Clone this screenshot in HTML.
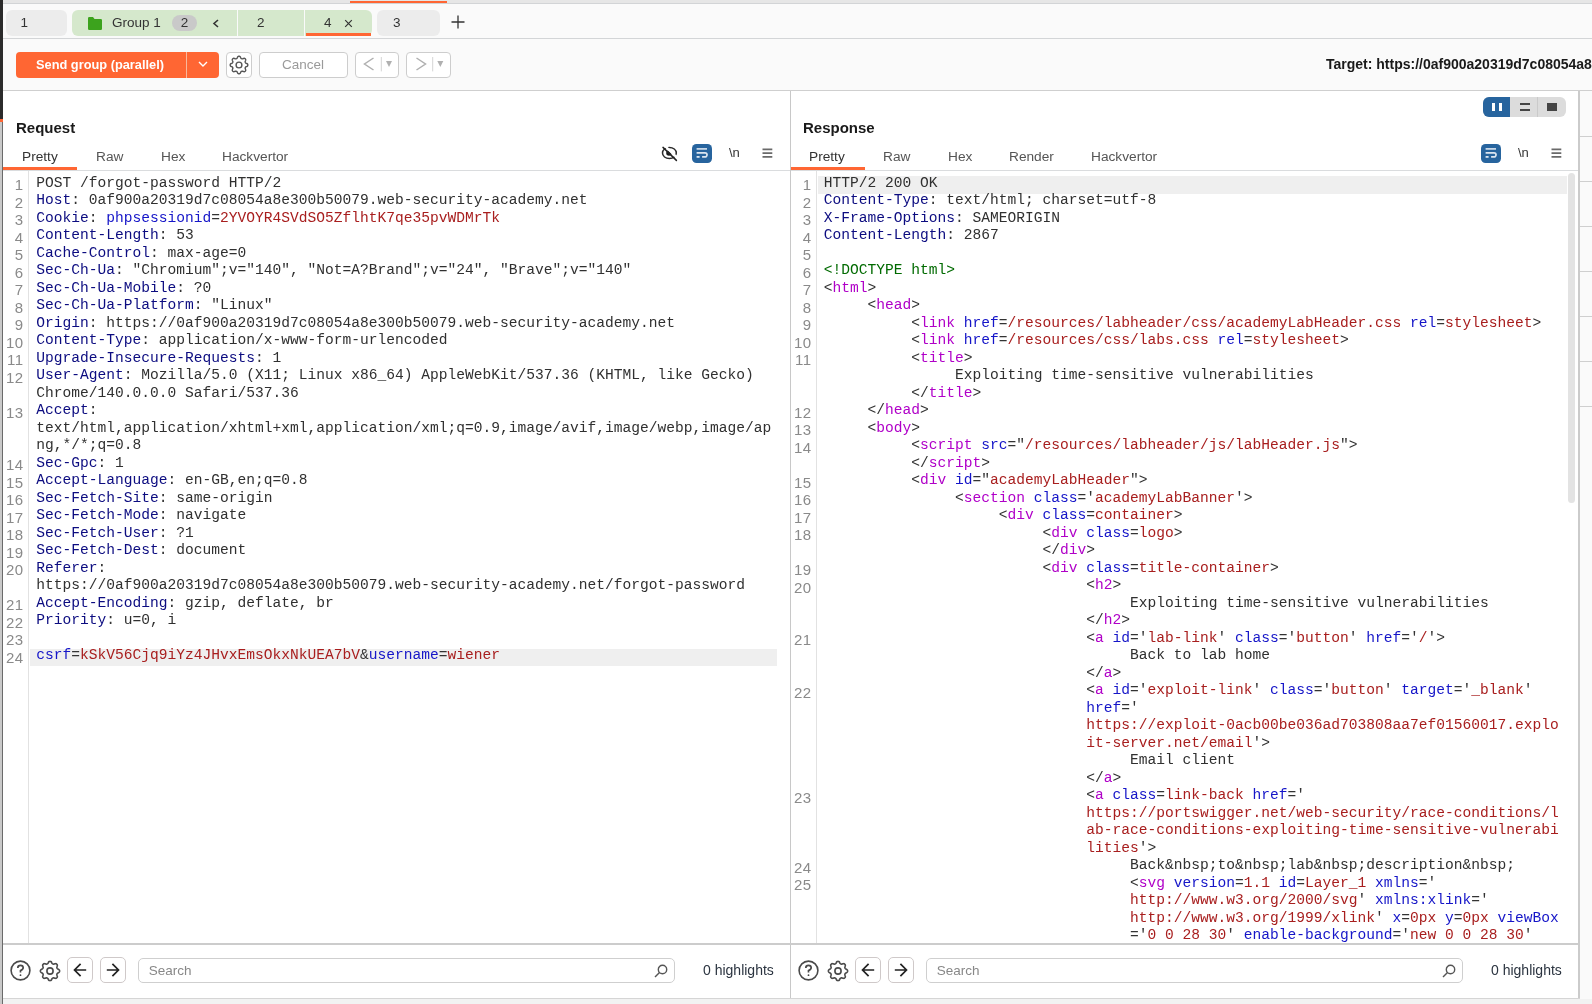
<!DOCTYPE html>
<html><head><meta charset="utf-8">
<style>
*{box-sizing:border-box;margin:0;padding:0}
html,body{width:1592px;height:1004px;overflow:hidden;background:#fafafa;font-family:"Liberation Sans",sans-serif;position:relative}
.abs{position:absolute}
#root{position:absolute;left:0;top:0;width:1592px;height:1004px;will-change:transform}
/* left border */
#lb1{left:0;top:0;width:3px;height:119px;background:#2b2b2b}
#lb2{left:0;top:119px;width:3px;height:3px;background:#ff6633}
#lb3{left:0;top:122px;width:3px;height:882px;background:#c9c9c9;border-right:1px solid #6a6a6a}
#topstrip{left:3px;top:0;width:1589px;height:4px;background:#e6e6e6;border-bottom:1px solid #d2d4d6}
#toporange{left:350px;top:0.5px;width:97px;height:2.5px;background:#ff6633}
#tabline{left:3px;top:38px;width:1589px;height:1px;background:#d3d5d7}
.tab{position:absolute;top:9.5px;height:26px;background:#ececec;border-radius:6px;font-size:13.5px;color:#333;line-height:26px}
.gtab{position:absolute;top:9.5px;height:26px;background:#d5e8cc;font-size:13.5px;color:#333;line-height:26px}
#toolline{left:3px;top:90px;width:1589px;height:1px;background:#cfcfcf}
.btn{position:absolute;top:52px;height:26px;background:#fff;border:1px solid #cdcdcd;border-radius:4px}
/* panels */
.panel{position:absolute;top:91px;height:853px;background:#fff}
.ptitle{position:absolute;font-weight:bold;font-size:15px;color:#1a1a1a;top:118.5px}
.ptab{position:absolute;font-size:13.7px;color:#555;top:148.5px}
.ptab.sel{color:#333}
.code{position:absolute;top:176px;font-family:"Liberation Mono",monospace;font-size:14.58px;line-height:17.5px;white-space:pre;color:#303030}
.gutter{position:absolute;top:175px;font-size:15px;letter-spacing:0.6px;line-height:17.5px;color:#8a8a8a;text-align:right}
.ln{height:17.5px;padding-top:1px}
.row{height:17.5px;padding-left:6.3px}
.tx{position:relative;top:-1.2px}
.row.hl{background:#efefef}
.hn{color:#0c0c80}
.pu{color:#333}
.an{color:#1515c8}
.av{color:#a81e1e}
.tg{color:#b000c8}
.dt{color:#006a00}
.bbar{position:absolute;top:944.5px;height:55px;background:#fff}
.search{position:absolute;top:958px;height:25px;background:#fff;border:1px solid #cfcfcf;border-radius:5px;font-size:13.5px;color:#888;line-height:23px;padding-left:10px}
.hl0{position:absolute;top:962px;font-size:14px;color:#2b3440}
.navbtn{position:absolute;top:957px;width:26px;height:26px;border:1px solid #cfc9c9;border-radius:5px;background:#fff}
</style></head><body><div id="root">
<div class="abs" id="lb1"></div><div class="abs" id="lb2"></div><div class="abs" id="lb3"></div>
<div class="abs" id="topstrip"></div><div class="abs" id="toporange"></div>

<!-- tab bar -->
<div class="tab" style="left:6px;width:61px;"><span style="position:absolute;left:14.5px">1</span></div>
<div class="gtab" style="left:72px;width:165px;border-radius:6px 0 0 6px">
  <svg class="abs" style="left:16px;top:7.5px" width="14" height="13" viewBox="0 0 14 13"><path d="M0 1.2 Q0 0 1.2 0 H5 L6.5 2 H12.8 Q14 2 14 3.2 V11.8 Q14 13 12.8 13 H1.2 Q0 13 0 11.8Z" fill="#3ca31d"/></svg>
  <span style="position:absolute;left:40px">Group 1</span>
  <span style="position:absolute;left:100px;top:5px;width:25px;height:16px;border-radius:8px;background:#c9c9c9;line-height:16px;text-align:center">2</span>
  <svg class="abs" style="left:140px;top:9px" width="8" height="9" viewBox="0 0 8 9"><path d="M6 1 L2 4.5 L6 8" stroke="#333" stroke-width="1.6" fill="none"/></svg>
</div>
<div class="gtab" style="left:238px;width:66px;"><span style="position:absolute;left:19px">2</span></div>
<div class="gtab" style="left:305px;width:67px;border-radius:0 6px 6px 0"><span style="position:absolute;left:19px">4</span>
  <svg class="abs" style="left:39px;top:9.5px" width="9" height="9" viewBox="0 0 9 9"><path d="M1.2 1.2 L7.8 7.8 M7.8 1.2 L1.2 7.8" stroke="#333" stroke-width="1.2"/></svg>
  <div class="abs" style="left:1px;top:23.5px;width:65px;height:2.5px;background:#ff6633"></div>
</div>
<div class="tab" style="left:377px;width:63px;"><span style="position:absolute;left:16px">3</span></div>
<svg class="abs" style="left:451px;top:15px" width="14" height="14" viewBox="0 0 14 14"><path d="M7 0.5 V13.5 M0.5 7 H13.5" stroke="#333" stroke-width="1.3"/></svg>
<div class="abs" id="tabline"></div>

<!-- toolbar -->
<div class="abs" style="left:16px;top:52px;width:203px;height:26px;background:#ff6633;border-radius:4px"></div>
<div class="abs" style="left:186px;top:52px;width:1px;height:26px;background:#f9b89c"></div>
<div class="abs" style="left:36px;top:56px;font-weight:bold;font-size:12.8px;color:#fff;line-height:17px">Send group (parallel)</div>
<svg class="abs" style="left:198px;top:61px" width="10" height="6" viewBox="0 0 10 6"><path d="M1 1 L5 5 L9 1" stroke="#fff" stroke-width="1.4" fill="none"/></svg>
<div class="btn" style="left:226px;width:26px"></div>
<svg class="abs" style="left:226.75px;top:53px" width="24" height="24" viewBox="0 0 24 24" fill="none" stroke="#555" stroke-width="1.4"><path d="M12.00 3.20 L12.34 3.23 L12.68 3.32 L13.00 3.51 L13.29 3.86 L13.52 4.35 L13.72 4.85 L13.91 5.21 L14.13 5.45 L14.36 5.60 L14.60 5.72 L14.86 5.81 L15.13 5.86 L15.45 5.85 L15.84 5.73 L16.33 5.51 L16.84 5.33 L17.29 5.29 L17.66 5.38 L17.96 5.55 L18.22 5.78 L18.45 6.04 L18.62 6.34 L18.71 6.71 L18.67 7.16 L18.49 7.67 L18.27 8.16 L18.15 8.55 L18.14 8.87 L18.19 9.14 L18.28 9.40 L18.40 9.64 L18.55 9.87 L18.79 10.09 L19.15 10.28 L19.65 10.48 L20.14 10.71 L20.49 11.00 L20.68 11.32 L20.77 11.66 L20.80 12.00 L20.77 12.34 L20.68 12.68 L20.49 13.00 L20.14 13.29 L19.65 13.52 L19.15 13.72 L18.79 13.91 L18.55 14.13 L18.40 14.36 L18.28 14.60 L18.19 14.86 L18.14 15.13 L18.15 15.45 L18.27 15.84 L18.49 16.33 L18.67 16.84 L18.71 17.29 L18.62 17.66 L18.45 17.96 L18.22 18.22 L17.96 18.45 L17.66 18.62 L17.29 18.71 L16.84 18.67 L16.33 18.49 L15.84 18.27 L15.45 18.15 L15.13 18.14 L14.86 18.19 L14.60 18.28 L14.36 18.40 L14.13 18.55 L13.91 18.79 L13.72 19.15 L13.52 19.65 L13.29 20.14 L13.00 20.49 L12.68 20.68 L12.34 20.77 L12.00 20.80 L11.66 20.77 L11.32 20.68 L11.00 20.49 L10.71 20.14 L10.48 19.65 L10.28 19.15 L10.09 18.79 L9.87 18.55 L9.64 18.40 L9.40 18.28 L9.14 18.19 L8.87 18.14 L8.55 18.15 L8.16 18.27 L7.67 18.49 L7.16 18.67 L6.71 18.71 L6.34 18.62 L6.04 18.45 L5.78 18.22 L5.55 17.96 L5.38 17.66 L5.29 17.29 L5.33 16.84 L5.51 16.33 L5.73 15.84 L5.85 15.45 L5.86 15.13 L5.81 14.86 L5.72 14.60 L5.60 14.36 L5.45 14.13 L5.21 13.91 L4.85 13.72 L4.35 13.52 L3.86 13.29 L3.51 13.00 L3.32 12.68 L3.23 12.34 L3.20 12.00 L3.23 11.66 L3.32 11.32 L3.51 11.00 L3.86 10.71 L4.35 10.48 L4.85 10.28 L5.21 10.09 L5.45 9.87 L5.60 9.64 L5.72 9.40 L5.81 9.14 L5.86 8.87 L5.85 8.55 L5.73 8.16 L5.51 7.67 L5.33 7.16 L5.29 6.71 L5.38 6.34 L5.55 6.04 L5.78 5.78 L6.04 5.55 L6.34 5.38 L6.71 5.29 L7.16 5.33 L7.67 5.51 L8.16 5.73 L8.55 5.85 L8.87 5.86 L9.14 5.81 L9.40 5.72 L9.64 5.60 L9.87 5.45 L10.09 5.21 L10.28 4.85 L10.48 4.35 L10.71 3.86 L11.00 3.51 L11.32 3.32 L11.66 3.23Z"/><circle cx="12" cy="12" r="2.9"/></svg>
<div class="btn" style="left:258.5px;width:89px;font-size:13.5px;color:#9a9a9a;text-align:center;line-height:24px">Cancel</div>
<div class="btn" style="left:355px;width:44px"></div>
<svg class="abs" style="left:362px;top:57px" width="32" height="16" viewBox="0 0 32 16"><path d="M11.5 1 L2.5 7 L11.5 13" stroke="#b0b0b0" stroke-width="1.5" fill="none"/><path d="M19.3 0 V14.4" stroke="#d4d4d4" stroke-width="1"/><path d="M24 4 H30 L27 10Z" fill="#b0b0b0"/></svg>
<div class="btn" style="left:406px;width:45px"></div>
<svg class="abs" style="left:413px;top:57px" width="32" height="16" viewBox="0 0 32 16"><path d="M3.5 1 L12.5 7 L3.5 13" stroke="#b0b0b0" stroke-width="1.5" fill="none"/><path d="M19.7 0 V14.4" stroke="#d4d4d4" stroke-width="1"/><path d="M24.3 4 H30.3 L27.3 10Z" fill="#b0b0b0"/></svg>
<div class="abs" style="left:1326px;top:55.5px;font-weight:bold;font-size:14px;color:#1a1a1a;white-space:nowrap;line-height:17px">Target: https://0af900a20319d7c08054a8e300b50079.web-security-academy.net</div>
<div class="abs" id="toolline"></div>

<!-- request panel -->
<div class="panel" style="left:3px;width:787px"></div>
<div class="ptitle" style="left:16px">Request</div>
<div class="ptab sel" style="left:22px">Pretty</div>
<div class="ptab" style="left:96px">Raw</div>
<div class="ptab" style="left:161px">Hex</div>
<div class="ptab" style="left:222px">Hackvertor</div>
<div class="abs" style="left:3px;top:170px;width:787px;height:1px;background:#dadcde"></div>
<div class="abs" style="left:3px;top:167px;width:74px;height:3px;background:#ff6633"></div>
<!-- request icons -->
<svg class="abs" style="left:658px;top:143px" width="24" height="21" viewBox="0 0 24 21" fill="none"><ellipse cx="11.4" cy="10" rx="6.9" ry="5.6" stroke="#2a2a2a" stroke-width="1.5"/><circle cx="11" cy="10" r="2.8" fill="#1a1a1a"/><path d="M6.6 2.6 L20 15.6" stroke="#fff" stroke-width="2.4"/><path d="M5 4.4 L18.4 17.4" stroke="#222" stroke-width="1.5" stroke-linecap="round"/></svg>
<div class="abs" style="left:692px;top:144.4px;width:19.8px;height:18.4px;background:#27649e;border-radius:4.5px"></div>
<svg class="abs" style="left:692px;top:144px" width="20" height="19" viewBox="0 0 20 19" fill="none" stroke="#dbe5f0" stroke-width="1.6"><path d="M4.6 4.9 H15"/><path d="M4.6 8.8 H13 A2.05 2.05 0 0 1 13 12.9 H10.1" stroke-width="1.7"/><path d="M4.6 12.9 H7.6" stroke-width="1.8"/></svg>
<div class="abs" style="left:729px;top:145px;font-size:13px;color:#333">\n</div>
<svg class="abs" style="left:761.8px;top:148px" width="11" height="11" viewBox="0 0 11 11"><path d="M0.5 1.4 H10.3 M0.5 5.1 H10.3 M0.5 8.9 H10.3" stroke="#6a6a6a" stroke-width="1.8"/></svg>
<!-- request code -->
<div class="abs" style="left:28px;top:171px;width:1px;height:773px;background:#e2e2e2"></div>
<div class="gutter" style="left:3px;width:20.8px"><div class="ln">1</div><div class="ln">2</div><div class="ln">3</div><div class="ln">4</div><div class="ln">5</div><div class="ln">6</div><div class="ln">7</div><div class="ln">8</div><div class="ln">9</div><div class="ln">10</div><div class="ln">11</div><div class="ln">12</div><div class="ln"></div><div class="ln">13</div><div class="ln"></div><div class="ln"></div><div class="ln">14</div><div class="ln">15</div><div class="ln">16</div><div class="ln">17</div><div class="ln">18</div><div class="ln">19</div><div class="ln">20</div><div class="ln"></div><div class="ln">21</div><div class="ln">22</div><div class="ln">23</div><div class="ln">24</div></div>
<div class="code" style="left:30px;width:747px"><div class="row"><span class="tx">POST /forgot-password HTTP/2</span></div><div class="row"><span class="tx"><span class="hn">Host</span><span class="pu">:</span> 0af900a20319d7c08054a8e300b50079.web-security-academy.net</span></div><div class="row"><span class="tx"><span class="hn">Cookie</span><span class="pu">:</span> <span class="an">phpsessionid</span><span class="pu">=</span><span class="av">2YVOYR4SVdSO5ZflhtK7qe35pvWDMrTk</span></span></div><div class="row"><span class="tx"><span class="hn">Content-Length</span><span class="pu">:</span> 53</span></div><div class="row"><span class="tx"><span class="hn">Cache-Control</span><span class="pu">:</span> max-age=0</span></div><div class="row"><span class="tx"><span class="hn">Sec-Ch-Ua</span><span class="pu">:</span> "Chromium";v="140", "Not=A?Brand";v="24", "Brave";v="140"</span></div><div class="row"><span class="tx"><span class="hn">Sec-Ch-Ua-Mobile</span><span class="pu">:</span> ?0</span></div><div class="row"><span class="tx"><span class="hn">Sec-Ch-Ua-Platform</span><span class="pu">:</span> "Linux"</span></div><div class="row"><span class="tx"><span class="hn">Origin</span><span class="pu">:</span> https://0af900a20319d7c08054a8e300b50079.web-security-academy.net</span></div><div class="row"><span class="tx"><span class="hn">Content-Type</span><span class="pu">:</span> application/x-www-form-urlencoded</span></div><div class="row"><span class="tx"><span class="hn">Upgrade-Insecure-Requests</span><span class="pu">:</span> 1</span></div><div class="row"><span class="tx"><span class="hn">User-Agent</span><span class="pu">:</span> Mozilla/5.0 (X11; Linux x86_64) AppleWebKit/537.36 (KHTML, like Gecko)</span></div><div class="row"><span class="tx">Chrome/140.0.0.0 Safari/537.36</span></div><div class="row"><span class="tx"><span class="hn">Accept</span><span class="pu">:</span></span></div><div class="row"><span class="tx">text/html,application/xhtml+xml,application/xml;q=0.9,image/avif,image/webp,image/ap</span></div><div class="row"><span class="tx">ng,*/*;q=0.8</span></div><div class="row"><span class="tx"><span class="hn">Sec-Gpc</span><span class="pu">:</span> 1</span></div><div class="row"><span class="tx"><span class="hn">Accept-Language</span><span class="pu">:</span> en-GB,en;q=0.8</span></div><div class="row"><span class="tx"><span class="hn">Sec-Fetch-Site</span><span class="pu">:</span> same-origin</span></div><div class="row"><span class="tx"><span class="hn">Sec-Fetch-Mode</span><span class="pu">:</span> navigate</span></div><div class="row"><span class="tx"><span class="hn">Sec-Fetch-User</span><span class="pu">:</span> ?1</span></div><div class="row"><span class="tx"><span class="hn">Sec-Fetch-Dest</span><span class="pu">:</span> document</span></div><div class="row"><span class="tx"><span class="hn">Referer</span><span class="pu">:</span></span></div><div class="row"><span class="tx">https://0af900a20319d7c08054a8e300b50079.web-security-academy.net/forgot-password</span></div><div class="row"><span class="tx"><span class="hn">Accept-Encoding</span><span class="pu">:</span> gzip, deflate, br</span></div><div class="row"><span class="tx"><span class="hn">Priority</span><span class="pu">:</span> u=0, i</span></div><div class="row"><span class="tx"></span></div><div class="row hl"><span class="tx"><span class="an">csrf</span><span class="pu">=</span><span class="av">kSkV56Cjq9iYz4JHvxEmsOkxNkUEA7bV</span><span class="pu">&amp;</span><span class="an">username</span><span class="pu">=</span><span class="av">wiener</span></span></div></div>

<!-- divider -->
<div class="abs" style="left:790px;top:91px;width:1px;height:908px;background:#c8c8c8"></div>

<!-- response panel -->
<div class="panel" style="left:791px;width:787px"></div>
<div class="ptitle" style="left:803px">Response</div>
<div class="ptab sel" style="left:809px">Pretty</div>
<div class="ptab" style="left:883px">Raw</div>
<div class="ptab" style="left:948px">Hex</div>
<div class="ptab" style="left:1009px">Render</div>
<div class="ptab" style="left:1091px">Hackvertor</div>
<div class="abs" style="left:791px;top:170px;width:787px;height:1px;background:#dadcde"></div>
<div class="abs" style="left:791px;top:167px;width:74px;height:3px;background:#ff6633"></div>
<!-- layout toggles -->
<div class="abs" style="left:1483px;top:97px;width:83px;height:20px;background:#dcdcdc;border-radius:6px;overflow:hidden">
  <div class="abs" style="left:0;top:0;width:27px;height:20px;background:#27649e"></div>
  <div class="abs" style="left:54px;top:0;width:1px;height:20px;background:#cacaca"></div>
  <div class="abs" style="left:9px;top:5.5px;width:3px;height:8.5px;background:#fff"></div>
  <div class="abs" style="left:15.5px;top:5.5px;width:3px;height:8.5px;background:#fff"></div>
  <div class="abs" style="left:36.5px;top:5.5px;width:10px;height:2.5px;background:#444"></div>
  <div class="abs" style="left:36.5px;top:11.5px;width:10px;height:2.5px;background:#444"></div>
  <div class="abs" style="left:64px;top:5.5px;width:10px;height:8.5px;background:#444"></div>
</div>
<div class="abs" style="left:1481px;top:144.4px;width:19.8px;height:18.4px;background:#27649e;border-radius:4.5px"></div>
<svg class="abs" style="left:1481px;top:144px" width="20" height="19" viewBox="0 0 20 19" fill="none" stroke="#dbe5f0" stroke-width="1.6"><path d="M4.6 4.9 H15"/><path d="M4.6 8.8 H13 A2.05 2.05 0 0 1 13 12.9 H10.1" stroke-width="1.7"/><path d="M4.6 12.9 H7.6" stroke-width="1.8"/></svg>
<div class="abs" style="left:1518px;top:145px;font-size:13px;color:#333">\n</div>
<svg class="abs" style="left:1550.5px;top:148px" width="11" height="11" viewBox="0 0 11 11"><path d="M0.5 1.4 H10.3 M0.5 5.1 H10.3 M0.5 8.9 H10.3" stroke="#6a6a6a" stroke-width="1.8"/></svg>
<!-- response code -->
<div class="abs" style="left:816px;top:171px;width:1px;height:773px;background:#e2e2e2"></div>
<div class="abs" style="left:791px;top:171px;width:787px;height:773px;overflow:hidden">
  <div class="gutter" style="left:0;top:4px;width:20.8px"><div class="ln">1</div><div class="ln">2</div><div class="ln">3</div><div class="ln">4</div><div class="ln">5</div><div class="ln">6</div><div class="ln">7</div><div class="ln">8</div><div class="ln">9</div><div class="ln">10</div><div class="ln">11</div><div class="ln"></div><div class="ln"></div><div class="ln">12</div><div class="ln">13</div><div class="ln">14</div><div class="ln"></div><div class="ln">15</div><div class="ln">16</div><div class="ln">17</div><div class="ln">18</div><div class="ln"></div><div class="ln">19</div><div class="ln">20</div><div class="ln"></div><div class="ln"></div><div class="ln">21</div><div class="ln"></div><div class="ln"></div><div class="ln">22</div><div class="ln"></div><div class="ln"></div><div class="ln"></div><div class="ln"></div><div class="ln"></div><div class="ln">23</div><div class="ln"></div><div class="ln"></div><div class="ln"></div><div class="ln">24</div><div class="ln">25</div><div class="ln"></div><div class="ln"></div><div class="ln"></div></div>
  <div class="code" style="left:26.5px;top:5px;width:749px"><div class="row hl"><span class="tx">HTTP/2 200 OK</span></div><div class="row"><span class="tx"><span class="hn">Content-Type</span><span class="pu">:</span> text/html; charset=utf-8</span></div><div class="row"><span class="tx"><span class="hn">X-Frame-Options</span><span class="pu">:</span> SAMEORIGIN</span></div><div class="row"><span class="tx"><span class="hn">Content-Length</span><span class="pu">:</span> 2867</span></div><div class="row"><span class="tx"></span></div><div class="row"><span class="tx"><span class="dt">&lt;!DOCTYPE html&gt;</span></span></div><div class="row"><span class="tx"><span class="pu">&lt;</span><span class="tg">html</span><span class="pu">&gt;</span></span></div><div class="row"><span class="tx">     <span class="pu">&lt;</span><span class="tg">head</span><span class="pu">&gt;</span></span></div><div class="row"><span class="tx">          <span class="pu">&lt;</span><span class="tg">link</span> <span class="an">href</span><span class="pu">=</span><span class="av">/resources/labheader/css/academyLabHeader.css</span> <span class="an">rel</span><span class="pu">=</span><span class="av">stylesheet</span><span class="pu">&gt;</span></span></div><div class="row"><span class="tx">          <span class="pu">&lt;</span><span class="tg">link</span> <span class="an">href</span><span class="pu">=</span><span class="av">/resources/css/labs.css</span> <span class="an">rel</span><span class="pu">=</span><span class="av">stylesheet</span><span class="pu">&gt;</span></span></div><div class="row"><span class="tx">          <span class="pu">&lt;</span><span class="tg">title</span><span class="pu">&gt;</span></span></div><div class="row"><span class="tx">               Exploiting time-sensitive vulnerabilities</span></div><div class="row"><span class="tx">          <span class="pu">&lt;/</span><span class="tg">title</span><span class="pu">&gt;</span></span></div><div class="row"><span class="tx">     <span class="pu">&lt;/</span><span class="tg">head</span><span class="pu">&gt;</span></span></div><div class="row"><span class="tx">     <span class="pu">&lt;</span><span class="tg">body</span><span class="pu">&gt;</span></span></div><div class="row"><span class="tx">          <span class="pu">&lt;</span><span class="tg">script</span> <span class="an">src</span><span class="pu">=</span><span class="pu">"</span><span class="av">/resources/labheader/js/labHeader.js</span><span class="pu">"</span><span class="pu">&gt;</span></span></div><div class="row"><span class="tx">          <span class="pu">&lt;/</span><span class="tg">script</span><span class="pu">&gt;</span></span></div><div class="row"><span class="tx">          <span class="pu">&lt;</span><span class="tg">div</span> <span class="an">id</span><span class="pu">=</span><span class="pu">"</span><span class="av">academyLabHeader</span><span class="pu">"</span><span class="pu">&gt;</span></span></div><div class="row"><span class="tx">               <span class="pu">&lt;</span><span class="tg">section</span> <span class="an">class</span><span class="pu">=</span><span class="pu">'</span><span class="av">academyLabBanner</span><span class="pu">'</span><span class="pu">&gt;</span></span></div><div class="row"><span class="tx">                    <span class="pu">&lt;</span><span class="tg">div</span> <span class="an">class</span><span class="pu">=</span><span class="av">container</span><span class="pu">&gt;</span></span></div><div class="row"><span class="tx">                         <span class="pu">&lt;</span><span class="tg">div</span> <span class="an">class</span><span class="pu">=</span><span class="av">logo</span><span class="pu">&gt;</span></span></div><div class="row"><span class="tx">                         <span class="pu">&lt;/</span><span class="tg">div</span><span class="pu">&gt;</span></span></div><div class="row"><span class="tx">                         <span class="pu">&lt;</span><span class="tg">div</span> <span class="an">class</span><span class="pu">=</span><span class="av">title-container</span><span class="pu">&gt;</span></span></div><div class="row"><span class="tx">                              <span class="pu">&lt;</span><span class="tg">h2</span><span class="pu">&gt;</span></span></div><div class="row"><span class="tx">                                   Exploiting time-sensitive vulnerabilities</span></div><div class="row"><span class="tx">                              <span class="pu">&lt;/</span><span class="tg">h2</span><span class="pu">&gt;</span></span></div><div class="row"><span class="tx">                              <span class="pu">&lt;</span><span class="tg">a</span> <span class="an">id</span><span class="pu">=</span><span class="pu">'</span><span class="av">lab-link</span><span class="pu">'</span> <span class="an">class</span><span class="pu">=</span><span class="pu">'</span><span class="av">button</span><span class="pu">'</span> <span class="an">href</span><span class="pu">=</span><span class="pu">'</span><span class="av">/</span><span class="pu">'</span><span class="pu">&gt;</span></span></div><div class="row"><span class="tx">                                   Back to lab home</span></div><div class="row"><span class="tx">                              <span class="pu">&lt;/</span><span class="tg">a</span><span class="pu">&gt;</span></span></div><div class="row"><span class="tx">                              <span class="pu">&lt;</span><span class="tg">a</span> <span class="an">id</span><span class="pu">=</span><span class="pu">'</span><span class="av">exploit-link</span><span class="pu">'</span> <span class="an">class</span><span class="pu">=</span><span class="pu">'</span><span class="av">button</span><span class="pu">'</span> <span class="an">target</span><span class="pu">=</span><span class="pu">'</span><span class="av">_blank</span><span class="pu">'</span></span></div><div class="row"><span class="tx">                              <span class="an">href</span><span class="pu">=</span><span class="pu">'</span></span></div><div class="row"><span class="tx">                              <span class="av">https://exploit-0acb00be036ad703808aa7ef01560017.explo</span></span></div><div class="row"><span class="tx">                              <span class="av">it-server.net/email</span><span class="pu">'</span><span class="pu">&gt;</span></span></div><div class="row"><span class="tx">                                   Email client</span></div><div class="row"><span class="tx">                              <span class="pu">&lt;/</span><span class="tg">a</span><span class="pu">&gt;</span></span></div><div class="row"><span class="tx">                              <span class="pu">&lt;</span><span class="tg">a</span> <span class="an">class</span><span class="pu">=</span><span class="av">link-back</span> <span class="an">href</span><span class="pu">=</span><span class="pu">'</span></span></div><div class="row"><span class="tx">                              <span class="av">https://portswigger.net/web-security/race-conditions/l</span></span></div><div class="row"><span class="tx">                              <span class="av">ab-race-conditions-exploiting-time-sensitive-vulnerabi</span></span></div><div class="row"><span class="tx">                              <span class="av">lities</span><span class="pu">'</span><span class="pu">&gt;</span></span></div><div class="row"><span class="tx">                                   Back&amp;nbsp;to&amp;nbsp;lab&amp;nbsp;description&amp;nbsp;</span></div><div class="row"><span class="tx">                                   <span class="pu">&lt;</span><span class="tg">svg</span> <span class="an">version</span><span class="pu">=</span><span class="av">1.1</span> <span class="an">id</span><span class="pu">=</span><span class="av">Layer_1</span> <span class="an">xmlns</span><span class="pu">=</span><span class="pu">'</span></span></div><div class="row"><span class="tx">                                   <span class="av">http://www.w3.org/2000/svg</span><span class="pu">'</span> <span class="an">xmlns:xlink</span><span class="pu">=</span><span class="pu">'</span></span></div><div class="row"><span class="tx">                                   <span class="av">http://www.w3.org/1999/xlink</span><span class="pu">'</span> <span class="an">x</span><span class="pu">=</span><span class="av">0px</span> <span class="an">y</span><span class="pu">=</span><span class="av">0px</span> <span class="an">viewBox</span></span></div><div class="row"><span class="tx">                                   <span class="pu">=</span><span class="pu">'</span><span class="av">0 0 28 30</span><span class="pu">'</span> <span class="an">enable-background</span><span class="pu">=</span><span class="pu">'</span><span class="av">new 0 0 28 30</span><span class="pu">'</span></span></div></div>
  <div class="abs" style="left:777px;top:2px;width:7px;height:330px;background:#e3e3e3;border-radius:4px"></div>
</div>

<!-- right sidebar -->
<div class="abs" style="left:1578px;top:91px;width:2px;height:908px;background:#cbcbcb"></div>

<!-- bottom bars -->
<div class="abs" style="left:3px;top:943px;width:1575px;height:1.5px;background:#cccccc"></div>
<div class="bbar" style="left:3px;width:787px"></div>
<div class="bbar" style="left:791px;width:787px"></div>
<div class="abs" style="left:3px;top:998px;width:1589px;height:1px;background:#d5d5d5"></div>
<div class="abs" style="left:3px;top:999px;width:1589px;height:5px;background:#f2f2f2"></div>

<!-- bottom bar contents -->
<svg class="abs" style="left:10px;top:960px" width="21" height="21" viewBox="0 0 21 21" fill="none" stroke="#4a4a4a" stroke-width="1.6"><circle cx="10.5" cy="10.5" r="9.4"/><path d="M7.8 8 Q7.8 5.3 10.5 5.3 Q13.2 5.3 13.2 7.8 Q13.2 9.6 10.5 10.6 V12.4" stroke-width="1.7"/><circle cx="10.5" cy="15.2" r="0.9" fill="#444" stroke="none"/></svg>
<svg class="abs" style="left:37.6px;top:958.5px" width="24" height="24" viewBox="0 0 24 24" fill="none" stroke="#4a4a4a" stroke-width="1.6"><path d="M12.00 2.40 L12.38 2.43 L12.75 2.52 L13.10 2.72 L13.41 3.07 L13.68 3.57 L13.90 4.07 L14.13 4.44 L14.38 4.68 L14.64 4.85 L14.91 4.98 L15.19 5.08 L15.49 5.15 L15.84 5.15 L16.26 5.04 L16.78 4.85 L17.32 4.68 L17.79 4.66 L18.17 4.77 L18.50 4.97 L18.79 5.21 L19.03 5.50 L19.23 5.83 L19.34 6.21 L19.32 6.68 L19.15 7.22 L18.96 7.74 L18.85 8.16 L18.85 8.51 L18.92 8.81 L19.02 9.09 L19.15 9.36 L19.32 9.62 L19.56 9.87 L19.93 10.10 L20.43 10.32 L20.93 10.59 L21.28 10.90 L21.48 11.25 L21.57 11.62 L21.60 12.00 L21.57 12.38 L21.48 12.75 L21.28 13.10 L20.93 13.41 L20.43 13.68 L19.93 13.90 L19.56 14.13 L19.32 14.38 L19.15 14.64 L19.02 14.91 L18.92 15.19 L18.85 15.49 L18.85 15.84 L18.96 16.26 L19.15 16.78 L19.32 17.32 L19.34 17.79 L19.23 18.17 L19.03 18.50 L18.79 18.79 L18.50 19.03 L18.17 19.23 L17.79 19.34 L17.32 19.32 L16.78 19.15 L16.26 18.96 L15.84 18.85 L15.49 18.85 L15.19 18.92 L14.91 19.02 L14.64 19.15 L14.38 19.32 L14.13 19.56 L13.90 19.93 L13.68 20.43 L13.41 20.93 L13.10 21.28 L12.75 21.48 L12.38 21.57 L12.00 21.60 L11.62 21.57 L11.25 21.48 L10.90 21.28 L10.59 20.93 L10.32 20.43 L10.10 19.93 L9.87 19.56 L9.62 19.32 L9.36 19.15 L9.09 19.02 L8.81 18.92 L8.51 18.85 L8.16 18.85 L7.74 18.96 L7.22 19.15 L6.68 19.32 L6.21 19.34 L5.83 19.23 L5.50 19.03 L5.21 18.79 L4.97 18.50 L4.77 18.17 L4.66 17.79 L4.68 17.32 L4.85 16.78 L5.04 16.26 L5.15 15.84 L5.15 15.49 L5.08 15.19 L4.98 14.91 L4.85 14.64 L4.68 14.38 L4.44 14.13 L4.07 13.90 L3.57 13.68 L3.07 13.41 L2.72 13.10 L2.52 12.75 L2.43 12.38 L2.40 12.00 L2.43 11.62 L2.52 11.25 L2.72 10.90 L3.07 10.59 L3.57 10.32 L4.07 10.10 L4.44 9.87 L4.68 9.62 L4.85 9.36 L4.98 9.09 L5.08 8.81 L5.15 8.51 L5.15 8.16 L5.04 7.74 L4.85 7.22 L4.68 6.68 L4.66 6.21 L4.77 5.83 L4.97 5.50 L5.21 5.21 L5.50 4.97 L5.83 4.77 L6.21 4.66 L6.68 4.68 L7.22 4.85 L7.74 5.04 L8.16 5.15 L8.51 5.15 L8.81 5.08 L9.09 4.98 L9.36 4.85 L9.62 4.68 L9.87 4.44 L10.10 4.07 L10.32 3.57 L10.59 3.07 L10.90 2.72 L11.25 2.52 L11.62 2.43Z"/><circle cx="12" cy="12" r="3.1"/></svg>
<div class="navbtn" style="left:67px"></div>
<svg class="abs" style="left:67px;top:957px" width="26" height="26" viewBox="0 0 26 26" fill="none" stroke="#222" stroke-width="1.7"><path d="M19.2 13 H7.5 M13.6 6.8 L7.5 13 L13.6 19.2"/></svg>
<div class="navbtn" style="left:100px"></div>
<svg class="abs" style="left:100px;top:957px" width="26" height="26" viewBox="0 0 26 26" fill="none" stroke="#222" stroke-width="1.7"><path d="M6.8 13 H18.5 M12.4 6.8 L18.5 13 L12.4 19.2"/></svg>
<div class="search" style="left:137.8px;width:537.5px">Search</div>
<svg class="abs" style="left:652.5px;top:963px" width="16" height="16" viewBox="0 0 16 16" fill="none" stroke="#555" stroke-width="1.4"><circle cx="9.5" cy="6.5" r="4.2"/><path d="M6.5 9.5 L2 14"/></svg>
<div class="hl0" style="left:703px">0 highlights</div><svg class="abs" style="left:798px;top:960px" width="21" height="21" viewBox="0 0 21 21" fill="none" stroke="#4a4a4a" stroke-width="1.6"><circle cx="10.5" cy="10.5" r="9.4"/><path d="M7.8 8 Q7.8 5.3 10.5 5.3 Q13.2 5.3 13.2 7.8 Q13.2 9.6 10.5 10.6 V12.4" stroke-width="1.7"/><circle cx="10.5" cy="15.2" r="0.9" fill="#444" stroke="none"/></svg>
<svg class="abs" style="left:825.6px;top:958.5px" width="24" height="24" viewBox="0 0 24 24" fill="none" stroke="#4a4a4a" stroke-width="1.6"><path d="M12.00 2.40 L12.38 2.43 L12.75 2.52 L13.10 2.72 L13.41 3.07 L13.68 3.57 L13.90 4.07 L14.13 4.44 L14.38 4.68 L14.64 4.85 L14.91 4.98 L15.19 5.08 L15.49 5.15 L15.84 5.15 L16.26 5.04 L16.78 4.85 L17.32 4.68 L17.79 4.66 L18.17 4.77 L18.50 4.97 L18.79 5.21 L19.03 5.50 L19.23 5.83 L19.34 6.21 L19.32 6.68 L19.15 7.22 L18.96 7.74 L18.85 8.16 L18.85 8.51 L18.92 8.81 L19.02 9.09 L19.15 9.36 L19.32 9.62 L19.56 9.87 L19.93 10.10 L20.43 10.32 L20.93 10.59 L21.28 10.90 L21.48 11.25 L21.57 11.62 L21.60 12.00 L21.57 12.38 L21.48 12.75 L21.28 13.10 L20.93 13.41 L20.43 13.68 L19.93 13.90 L19.56 14.13 L19.32 14.38 L19.15 14.64 L19.02 14.91 L18.92 15.19 L18.85 15.49 L18.85 15.84 L18.96 16.26 L19.15 16.78 L19.32 17.32 L19.34 17.79 L19.23 18.17 L19.03 18.50 L18.79 18.79 L18.50 19.03 L18.17 19.23 L17.79 19.34 L17.32 19.32 L16.78 19.15 L16.26 18.96 L15.84 18.85 L15.49 18.85 L15.19 18.92 L14.91 19.02 L14.64 19.15 L14.38 19.32 L14.13 19.56 L13.90 19.93 L13.68 20.43 L13.41 20.93 L13.10 21.28 L12.75 21.48 L12.38 21.57 L12.00 21.60 L11.62 21.57 L11.25 21.48 L10.90 21.28 L10.59 20.93 L10.32 20.43 L10.10 19.93 L9.87 19.56 L9.62 19.32 L9.36 19.15 L9.09 19.02 L8.81 18.92 L8.51 18.85 L8.16 18.85 L7.74 18.96 L7.22 19.15 L6.68 19.32 L6.21 19.34 L5.83 19.23 L5.50 19.03 L5.21 18.79 L4.97 18.50 L4.77 18.17 L4.66 17.79 L4.68 17.32 L4.85 16.78 L5.04 16.26 L5.15 15.84 L5.15 15.49 L5.08 15.19 L4.98 14.91 L4.85 14.64 L4.68 14.38 L4.44 14.13 L4.07 13.90 L3.57 13.68 L3.07 13.41 L2.72 13.10 L2.52 12.75 L2.43 12.38 L2.40 12.00 L2.43 11.62 L2.52 11.25 L2.72 10.90 L3.07 10.59 L3.57 10.32 L4.07 10.10 L4.44 9.87 L4.68 9.62 L4.85 9.36 L4.98 9.09 L5.08 8.81 L5.15 8.51 L5.15 8.16 L5.04 7.74 L4.85 7.22 L4.68 6.68 L4.66 6.21 L4.77 5.83 L4.97 5.50 L5.21 5.21 L5.50 4.97 L5.83 4.77 L6.21 4.66 L6.68 4.68 L7.22 4.85 L7.74 5.04 L8.16 5.15 L8.51 5.15 L8.81 5.08 L9.09 4.98 L9.36 4.85 L9.62 4.68 L9.87 4.44 L10.10 4.07 L10.32 3.57 L10.59 3.07 L10.90 2.72 L11.25 2.52 L11.62 2.43Z"/><circle cx="12" cy="12" r="3.1"/></svg>
<div class="navbtn" style="left:855px"></div>
<svg class="abs" style="left:855px;top:957px" width="26" height="26" viewBox="0 0 26 26" fill="none" stroke="#222" stroke-width="1.7"><path d="M19.2 13 H7.5 M13.6 6.8 L7.5 13 L13.6 19.2"/></svg>
<div class="navbtn" style="left:888px"></div>
<svg class="abs" style="left:888px;top:957px" width="26" height="26" viewBox="0 0 26 26" fill="none" stroke="#222" stroke-width="1.7"><path d="M6.8 13 H18.5 M12.4 6.8 L18.5 13 L12.4 19.2"/></svg>
<div class="search" style="left:925.8px;width:537.5px">Search</div>
<svg class="abs" style="left:1440.5px;top:963px" width="16" height="16" viewBox="0 0 16 16" fill="none" stroke="#555" stroke-width="1.4"><circle cx="9.5" cy="6.5" r="4.2"/><path d="M6.5 9.5 L2 14"/></svg>
<div class="hl0" style="left:1491px">0 highlights</div>
<!-- sidebar lines -->
<div class="abs" style="left:1580px;top:91px;width:12px;height:908px;background:#fafafa"></div><div class="abs" style="left:1580px;top:136px;width:12px;height:1px;background:#cfcfcf"></div><div class="abs" style="left:1580px;top:181px;width:12px;height:1px;background:#cfcfcf"></div><div class="abs" style="left:1580px;top:226px;width:12px;height:1px;background:#cfcfcf"></div><div class="abs" style="left:1580px;top:271px;width:12px;height:1px;background:#cfcfcf"></div><div class="abs" style="left:1580px;top:316px;width:12px;height:1px;background:#cfcfcf"></div><div class="abs" style="left:1580px;top:361px;width:12px;height:1px;background:#cfcfcf"></div><div class="abs" style="left:1580px;top:406px;width:12px;height:1px;background:#cfcfcf"></div>

</div></body></html>
